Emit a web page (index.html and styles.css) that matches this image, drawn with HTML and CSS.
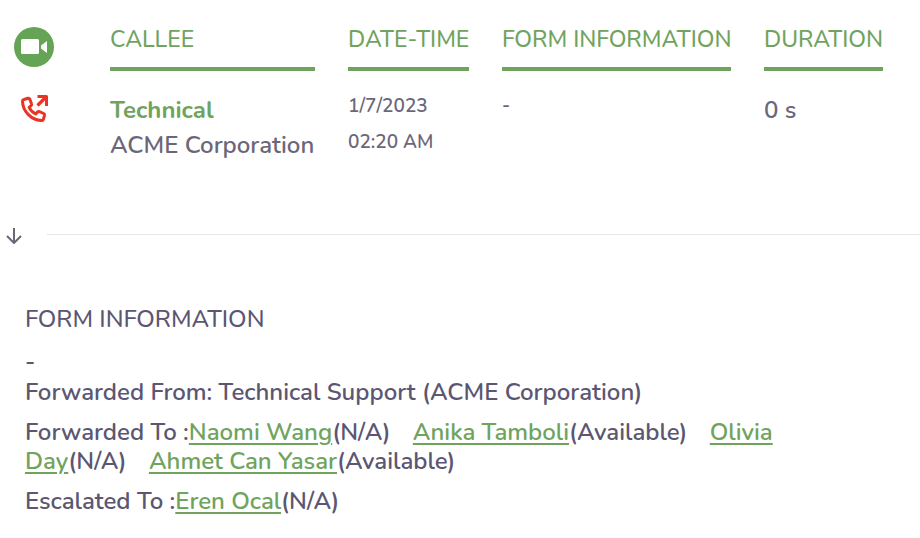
FILE: index.html
```html
<!DOCTYPE html>
<html lang="en">
<head>
<meta charset="UTF-8">
<meta name="viewport" content="width=device-width, initial-scale=1.0">
<title>Call History</title>
<link rel="stylesheet" href="styles.css">
</head>
<body>
<table class="calls">
    <colgroup>
        <col class="col-icon">
        <col class="col-callee">
        <col class="col-date">
        <col class="col-form">
        <col>
    </colgroup>
    <thead>
        <tr>
            <td class="icon-cell">
                <svg class="video-icon" viewBox="0 0 40 40" role="img" aria-label="Video call">
                    <circle cx="20" cy="20" r="20" fill="#65a455"/>
                    <rect x="7" y="12" width="18" height="15" rx="1.500" fill="#fff"/>
                    <path d="M27 18.500L33 14v12l-6-4.500z" fill="#fff"/>
                </svg>
            </td>
            <th><span>CALLEE</span></th>
            <th><span>DATE-TIME</span></th>
            <th><span>FORM INFORMATION</span></th>
            <th><span>DURATION</span></th>
        </tr>
    </thead>
    <tbody>
        <tr>
            <td class="icon-cell">
                <svg class="phone-icon" viewBox="0 0 28 28" role="img" aria-label="Outgoing call" fill="none" stroke="#ea3323" stroke-width="3" stroke-linejoin="round">
                    <path d="M16.500 10.500L25 2" stroke-width="3.200"/>
                    <path d="M16.500 1.500H25.500V11"/>
                    <path d="M3 4.500l4-1.200c.8-.2 1.500.2 1.800.9l1.700 4.600c.3.700.1 1.300-.4 1.800l-2 1.700c1.400 3 3.700 5.300 6.700 6.700l1.700-2c.5-.6 1.200-.7 1.900-.4l4.300 1.900c.7.300 1 1 .8 1.800l-1.100 4c-.2.800-.8 1.200-1.500 1.200C10.700 25.500 1.500 16.300 1.500 6c0-.7.600-1.300 1.500-1.500z"/>
                </svg>
            </td>
            <td class="callee">
                <strong>Technical</strong>
                <div>ACME Corporation</div>
            </td>
            <td class="small">1/7/2023<br>02:20 AM</td>
            <td class="small">-</td>
            <td class="duration">0 s</td>
        </tr>
    </tbody>
</table>

<div class="divider">
    <button type="button" aria-label="Toggle details">
        <svg viewBox="0 0 16 16" fill="none" stroke="#6b6779" stroke-width="2">
            <path d="M8 0v15M1 8l7 7 7-7"/>
        </svg>
    </button>
    <hr>
</div>

<div class="details">
    <h2>FORM INFORMATION</h2>
    <p class="empty">-</p>
    <p>Forwarded From: Technical Support (ACME Corporation)</p>
    <p>Forwarded To :<span class="person"><a href="#">Naomi Wang</a>(N/A)</span> <span class="person"><a href="#">Anika Tamboli</a>(Available)</span> <span class="person"><a href="#">Olivia Day</a>(N/A)</span> <span class="person"><a href="#">Ahmet Can Yasar</a>(Available)</span></p>
    <p>Escalated To :<span class="person"><a href="#">Eren Ocal</a>(N/A)</span></p>
</div>
</body>
</html>
```

FILE: styles.css
```css
body {
    margin: 0;
    background-color: #fff;
    color: #6b6779;
    font-family: Nunito, Lato, sans-serif;
    font-size: 24px;
    font-weight: 600;
}
.calls {
    width: 100%;
    padding: 23px 4px 0 14px;
    border-spacing: 0;
    table-layout: fixed;
}
.col-icon {
    width: 96px;
}
.col-callee {
    width: 238px;
}
.col-date {
    width: 154px;
}
.col-form {
    width: 262px;
}
.calls th,
.calls td {
    padding: 0 33px 0 0;
    text-align: left;
    vertical-align: top;
    white-space: nowrap;
}
.calls th {
    color: #70a35e;
    font-size: 23px;
    font-weight: 500;
    line-height: 34px;
}
.calls th span {
    display: block;
    padding-bottom: 10px;
    border-bottom: 4px solid #70a35e;
}
.calls svg {
    display: block;
}
.video-icon {
    width: 40px;
    height: 40px;
    margin-top: 4px;
}
.phone-icon {
    width: 28px;
    height: 28px;
    margin: 24px 0 0 7px;
}
.calls .callee,
.calls .duration {
    padding-top: 22px;
    line-height: 35px;
}
.callee strong {
    color: #70a35e;
    font-weight: 700;
}
.calls .small {
    padding-top: 17px;
    font-size: 19px;
    line-height: 36px;
}
.divider {
    display: flex;
    align-items: flex-start;
    gap: 25px;
    margin-top: 65px;
}
.divider button {
    padding: 0 0 0 6px;
    border: none;
    background: none;
    cursor: pointer;
}
.divider svg {
    display: block;
    width: 16px;
    height: 16px;
}
.divider hr {
    flex: 1;
    margin: 6px 0 0;
    border: none;
    border-top: 1px solid #e6e5ea;
}
.details {
    padding: 61px 120px 20px 25px;
    color: #5b5671;
    line-height: 29px;
}
.details h2 {
    margin: 0 0 13px;
    font-size: 24px;
    font-weight: 500;
}
.details p {
    margin: 0 0 11px;
}
.details .empty {
    margin-bottom: 2px;
}
.details a {
    color: #70a35e;
    text-decoration-thickness: 2px;
    text-underline-offset: 3px;
}
.person {
    margin-right: 16px;
}
```
